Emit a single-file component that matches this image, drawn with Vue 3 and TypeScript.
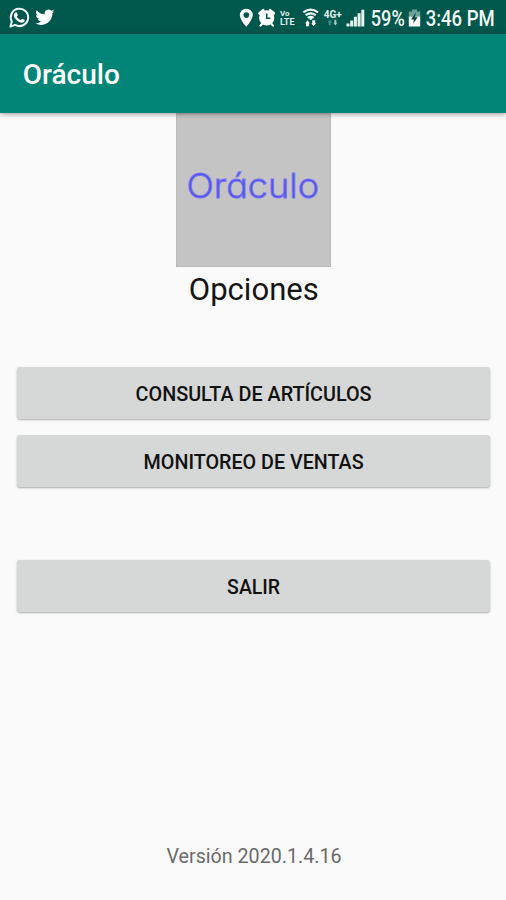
<script setup lang="ts">
import { ref } from 'vue'

interface MenuOption {
  id: string
  label: string
  width: number
  separated?: boolean
}

const options: MenuOption[] = [
  { id: 'articles', label: 'CONSULTA DE ARTÍCULOS', width: 236 },
  { id: 'sales', label: 'MONITOREO DE VENTAS', width: 220 },
  { id: 'exit', label: 'SALIR', width: 53, separated: true },
]
const selected = ref<string | null>(null)
</script>

<template>
  <div class="screen">
    <header class="status">
      <svg class="icon" width="32" height="34" viewBox="0 0 32 34">
        <path d="M10.4 26.6l1.4-5.1a8.7 8.7 0 1 1 3.3 3.4z" fill="none" stroke="#f1f7f6" stroke-width="2" stroke-linejoin="round" />
        <path d="M15.1 12.7c.6-.7 1.5-.7 1.8 0l.9 2c.2.6-.6 1.3-1 1.8.9 1.7 2.1 2.8 3.9 3.5.6-.5 1.1-1.5 1.7-1.3l2 1c.6.4.2 1.6-.4 2.2-1.300 1.200-3.200.8-4.900 0-2.500-1.200-4.100-3-5-5.300-.5-1.400-.1-2.900 1-3.900z" fill="#fff" />
      </svg>
      <svg class="icon" width="26" height="34" viewBox="32 0 26 34">
        <path transform="translate(35.400 7.700) scale(.79)" fill="#fff" d="M23.950 4.570a10 10 0 0 1-2.820.770 4.960 4.960 0 0 0 2.160-2.720 9.900 9.900 0 0 1-3.120 1.190 4.920 4.920 0 0 0-8.380 4.480A13.930 13.930 0 0 1 1.640 3.160a4.920 4.920 0 0 0 1.520 6.570 4.900 4.900 0 0 1-2.230-.610v.060a4.920 4.920 0 0 0 3.950 4.830 5 5 0 0 1-2.210.080 4.940 4.940 0 0 0 4.600 3.420A9.870 9.870 0 0 1 0 19.540a13.990 13.990 0 0 0 7.550 2.210c9.140 0 14.300-7.720 14.010-14.640a10 10 0 0 0 2.390-2.540z" />
      </svg>
      <span class="spacer" />
      <svg class="icon" width="18" height="34" viewBox="238 0 18 34">
        <path fill-rule="evenodd" fill="#fff" d="M246.300 8.700a6.400 6.400 0 0 0-6.500 6.400c0 4.700 6.500 11.800 6.500 11.800s6.500-7.100 6.500-11.800a6.400 6.400 0 0 0-6.500-6.400zm0 3.600a2.800 2.800 0 1 1 0 5.600 2.800 2.800 0 0 1 0-5.600z" />
      </svg>
      <svg class="icon" width="21" height="34" viewBox="256 0 21 34">
        <path d="M259.600 13.400l3.700-3.100M273.800 13.400l-3.700-3.100" fill="none" stroke="#fff" stroke-width="2.800" stroke-linecap="round" />
        <path d="M260.500 25.600l2.500-3M272.900 25.600l-2.500-3" fill="none" stroke="#fff" stroke-width="2.200" stroke-linecap="round" />
        <circle cx="266.700" cy="17.900" r="7.600" fill="#fff" />
        <path d="M266.700 13.600v4.700h3.700" fill="none" stroke="#00574b" stroke-width="1.600" />
      </svg>
      <svg class="icon volte" width="21" height="34" viewBox="277 0 21 34">
        <text x="280" y="16.300" font-size="7.500" textLength="9.500" lengthAdjust="spacingAndGlyphs">Vo</text>
        <text x="280" y="25" font-size="9.500" textLength="14.500" lengthAdjust="spacingAndGlyphs">LTE</text>
      </svg>
      <svg class="icon" width="23" height="34" viewBox="298 0 23 34">
        <g fill="none" stroke="#f0f6f5" stroke-width="2.200">
          <path d="M303.400 12.300q7.200-5.300 14.600 0M305.600 15.200q5.100-3.700 10.200 0M307.800 17.900q2.900-2.100 5.800 0" />
        </g>
        <circle cx="310.700" cy="18.800" r="1.300" fill="#fff" />
        <path d="M307.600 20.300l2.300 2.900h-.9v3h-3v-3h-.9zM313.600 26.200l-2.300-2.900h.9v-3h3v3h.9z" fill="#fff" />
      </svg>
      <svg class="icon volte" width="23" height="34" viewBox="321 0 23 34">
        <text x="323.800" y="17.600" font-size="10.500" textLength="18" lengthAdjust="spacingAndGlyphs">4G+</text>
        <path d="M329.800 19.500l2 2.700h-1.100v3h-1.900v-3h-1.100z" fill="#4b9188" />
        <path d="M335.300 25.500l-2-2.700h1.100v-3h1.900v3h1.100z" fill="#a4cbc6" />
      </svg>
      <svg class="icon" width="24" height="34" viewBox="344 0 24 34">
        <path d="M346.500 23.400h3v3.100h-3zM350.200 20.400h3v6.100h-3zM353.900 16.700h3v9.800h-3zM357.600 13.300h3v13.200h-3zM361.300 9.700h3v16.800h-3z" fill="#e9f3f1" />
      </svg>
      <svg class="icon clock" width="39" height="34" viewBox="368 0 39 34">
        <text x="370.800" y="26.200" font-size="21.500" textLength="34" lengthAdjust="spacingAndGlyphs">59%</text>
      </svg>
      <svg class="icon" width="16" height="34" viewBox="407 0 16 34">
        <path d="M412 9.500h5v2h3.200v6h-11.400v-6h3.200z" fill="#6f9f98" />
        <path d="M408.800 16.700h11.400v9.800h-11.400z" fill="#fff" />
        <path d="M415.800 12.500l-4.700 7h2.800l-.8 4.300 4.600-6.500h-2.700z" fill="#00463d" />
      </svg>
      <svg class="icon clock" width="83" height="34" viewBox="423 0 83 34">
        <text x="425.700" y="26.200" font-size="21.500" textLength="69" lengthAdjust="spacingAndGlyphs">3:46 PM</text>
      </svg>
    </header>

    <div class="appbar">
      <svg width="130" height="78" viewBox="0 0 130 78" class="title">
        <text x="22.800" y="50.300" textLength="97" lengthAdjust="spacingAndGlyphs">Oráculo</text>
      </svg>
    </div>

    <main class="content">
      <div class="brand">
        <svg width="155" height="154" viewBox="0 0 155 154">
          <text class="mark" x="10.500" y="85.300" textLength="132.500" lengthAdjust="spacingAndGlyphs">Oráculo</text>
        </svg>
      </div>
      <svg class="heading" width="155" height="46" viewBox="0 0 155 46">
        <text x="12.800" y="33.300" textLength="130" lengthAdjust="spacingAndGlyphs">Opciones</text>
      </svg>

      <nav class="menu">
        <button
          v-for="option in options"
          :key="option.id"
          type="button"
          class="option"
          :class="{ separated: option.separated }"
          @click="selected = option.id"
        >
          <svg width="260" height="52" viewBox="0 0 260 52">
            <text x="130.600" y="33.700" text-anchor="middle" :textLength="option.width" lengthAdjust="spacingAndGlyphs">{{ option.label }}</text>
          </svg>
        </button>
      </nav>

      <footer class="version">
        <svg width="200" height="30" viewBox="0 0 200 30">
          <text x="13.500" y="22" textLength="175" lengthAdjust="spacingAndGlyphs">Versión 2020.1.4.16</text>
        </svg>
      </footer>
    </main>
  </div>
</template>

<style>
body {
  margin: 0;
  background: #fafafa;
}
</style>

<style scoped>
.screen {
  width: 506px;
  height: 900px;
  display: flex;
  flex-direction: column;
  overflow: hidden;
  background: #fafafa;
  font-family: Roboto, "Liberation Sans", sans-serif;
}
svg {
  display: block;
  flex: none;
}
.icon {
  overflow: visible;
}
.status {
  height: 34px;
  flex: none;
  display: flex;
  background: #00574b;
}
.spacer {
  flex: 1;
}
.volte text {
  fill: #e3efed;
  font-weight: 700;
}
.clock text {
  fill: #f5faf9;
  font-weight: 500;
}
.appbar {
  height: 79px;
  flex: none;
  position: relative;
  background: #008577;
  box-shadow: 0 1px 5px rgba(0, 0, 0, 0.4);
}
.title text {
  fill: #fff;
  font-size: 27px;
  font-weight: 500;
}
.content {
  flex: 1;
  display: flex;
  flex-direction: column;
  align-items: center;
}
.brand {
  width: 155px;
  height: 154px;
  background: #c4c4c4;
  box-shadow: inset 0 0 0 1px #b9b9b9;
}
.mark {
  font-family: Inter, Lato, sans-serif;
  font-feature-settings: "cv11" 1;
  font-size: 34.5px;
  font-weight: 300;
  fill: #5250e6;
  stroke: #7674f2;
  stroke-width: 0.9px;
}
.heading text {
  font-size: 31px;
  fill: #151515;
}
.menu {
  margin-top: 54px;
  width: 473px;
  display: flex;
  flex-direction: column;
  gap: 16px;
}
.option {
  height: 52px;
  padding: 0;
  border: 0;
  border-radius: 3px;
  display: flex;
  justify-content: center;
  background: #d6d7d7;
  font-family: inherit;
  box-shadow: 0 1px 2px rgba(0, 0, 0, 0.32);
}
.option.separated {
  margin-top: 57px;
}
.option text {
  font-size: 20px;
  font-weight: 500;
  fill: #111;
}
.version {
  margin-top: auto;
  margin-bottom: 29px;
}
.version text {
  font-size: 20px;
  fill: #6a6a6a;
}
</style>
